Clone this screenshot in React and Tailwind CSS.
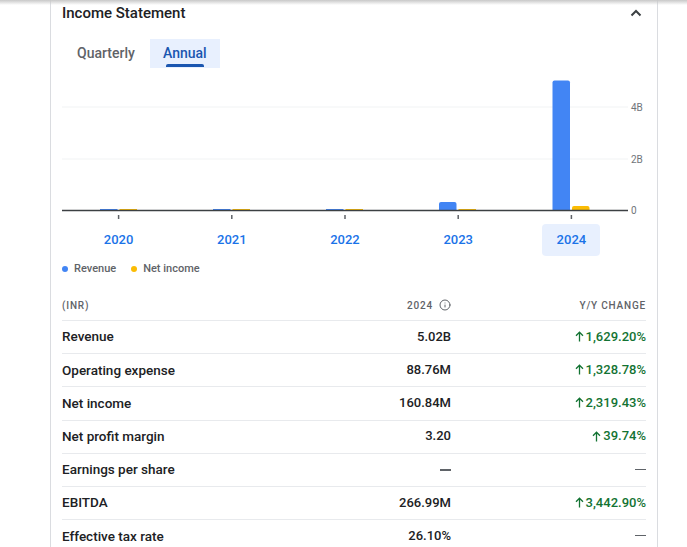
import { Info } from "lucide-react"

const years = ["2020", "2021", "2022", "2023", "2024"]

const rows = [
  { label: "Revenue", value: "5.02B", change: "1,629.20%" },
  { label: "Operating expense", value: "88.76M", change: "1,328.78%" },
  { label: "Net income", value: "160.84M", change: "2,319.43%" },
  { label: "Net profit margin", value: "3.20", change: "39.74%" },
  { label: "Earnings per share", value: null, change: null },
  { label: "EBITDA", value: "266.99M", change: "3,442.90%" },
  { label: "Effective tax rate", value: "26.10%", change: null },
]

// bar x positions relative to chart origin, tops in svg coords (baseline 134)
const bars = [
  { x: 38, blue: 133, yellow: 133 },
  { x: 151, blue: 133, yellow: 133 },
  { x: 264, blue: 133, yellow: 133 },
  { x: 377, blue: 126, yellow: 133 },
  { x: 490.5, blue: 4.5, yellow: 130 },
]

function Bar({ x, top, color }) {
  const h = 134 - top
  if (h < 2) return <rect x={x} y={top} width={17.5} height={h} fill={color} />
  return <path d={`M${x} 134 V${top + 2} Q${x} ${top} ${x + 2} ${top} H${x + 15.5} Q${x + 17.5} ${top} ${x + 17.5} ${top + 2} V134 Z`} fill={color} />
}

function Chart() {
  return (
    <svg width="594" height="146" className="block">
      <line x1="0" x2="566" y1="31" y2="31" stroke="#f1f3f4" strokeWidth="1" />
      <line x1="0" x2="566" y1="83" y2="83" stroke="#f1f3f4" strokeWidth="1" />
      {bars.map((b) => (
        <g key={b.x}>
          <Bar x={b.x} top={b.blue} color="#4285f4" />
          <Bar x={b.x + 19.5} top={b.yellow} color="#fbbc04" />
        </g>
      ))}
      <line x1="0" x2="566" y1="134.5" y2="134.5" stroke="#3c4043" strokeWidth="1.5" />
      {[56.6, 169.8, 283, 396.2, 509.4].map((t) => (
        <line key={t} x1={t} x2={t} y1="139" y2="143" stroke="#5f6368" strokeWidth="1.5" />
      ))}
      <g fill="#70757a" fontSize="10" fontFamily="Roboto, sans-serif">
        <text x="569" y="35">4B</text>
        <text x="569" y="87">2B</text>
        <text x="569" y="138">0</text>
      </g>
    </svg>
  )
}

function UpArrow() {
  return (
    <svg width="9" height="11" viewBox="0 0 9 11" className="mr-[2px]">
      <path d="M4.5 10.5V1.2M1 4.7L4.5 1.2L8 4.7" stroke="#137333" strokeWidth="1.3" fill="none" />
    </svg>
  )
}

function Dash() {
  return <span className="inline-block h-[1.5px] w-[11px] bg-[#5f6368] align-middle" />
}

export default function App() {
  return (
    <div className="relative h-[547px] w-[687px] overflow-hidden bg-white" style={{ fontFamily: "Roboto, 'Open Sans', sans-serif" }}>
      <div className="pointer-events-none absolute left-0 top-0 z-10 h-[5px] w-full bg-gradient-to-b from-[#c8c8c8] to-transparent" />
      <div className="ml-[50px] h-full w-[608px] border-l border-r border-[#dadce0] pl-[11px] pr-[10px]">
        <div className="flex h-[26px] items-center justify-between">
          <h2 className="text-[15px] font-medium text-[#202124]">Income Statement</h2>
          <svg width="12" height="8" viewBox="0 0 12 8" className="mr-[5px]">
            <path d="M1.5 6.5L6 2L10.5 6.5" stroke="#3c4043" strokeWidth="2" fill="none" />
          </svg>
        </div>

        <div className="mt-[13px] flex h-[29px]">
          <div className="flex items-center px-[15px] text-[14px] font-medium text-[#5f6368]">Quarterly</div>
          <div className="relative flex w-[70px] items-center justify-center bg-[#e8f0fe] text-[14px] font-medium text-[#1a56b0]">
            Annual
            <span className="absolute bottom-[1px] left-[16px] h-[3px] w-[38px] rounded-t-[2px] bg-[#1a56b0]" />
          </div>
        </div>

        <div className="mt-[8px]">
          <Chart />
        </div>

        <div className="mt-[2px] grid w-[566px] grid-cols-5">
          {years.map((y) => (
            <div key={y} className="flex justify-center">
              <span className={`flex h-[32px] w-[58px] items-center justify-center rounded-[4px] text-[13px] font-medium text-[#1a73e8] ${y === "2024" ? "bg-[#e8f0fe]" : ""}`}>
                {y}
              </span>
            </div>
          ))}
        </div>

        <div className="mt-[7px] flex h-[12px] items-center text-[11px] font-medium text-[#5f6368]">
          <span className="h-[6px] w-[6px] rounded-full bg-[#4285f4]" />
          <span className="ml-[6px]">Revenue</span>
          <span className="ml-[15px] h-[6px] w-[6px] rounded-full bg-[#fbbc04]" />
          <span className="ml-[6px]">Net income</span>
        </div>

        <div className="mt-[15px] w-[584px]">
          <div className="flex h-[30px] items-center text-[10px] font-medium tracking-[0.8px] text-[#5f6368]">
            <div className="flex-1">(INR)</div>
            <div className="flex items-center gap-[6px]">
              2024
              <Info size={12} strokeWidth={2} color="#5f6368" />
            </div>
            <div className="w-[195px] text-right">Y/Y CHANGE</div>
          </div>
          {rows.map((r) => (
            <div key={r.label} className="flex h-[33.2px] items-center border-t border-[#e8eaed] pb-[1px] text-[13px] font-medium text-[#202124]">
              <div className="flex-1 text-[13.5px]">{r.label}</div>
              <div className="text-right">{r.value ? r.value : <Dash />}</div>
              <div className="flex w-[195px] items-center justify-end">
                {r.change ? (
                  <span className="flex items-center text-[#137333]">
                    <UpArrow />
                    {r.change}
                  </span>
                ) : (
                  <Dash />
                )}
              </div>
            </div>
          ))}
        </div>
      </div>
    </div>
  )
}
